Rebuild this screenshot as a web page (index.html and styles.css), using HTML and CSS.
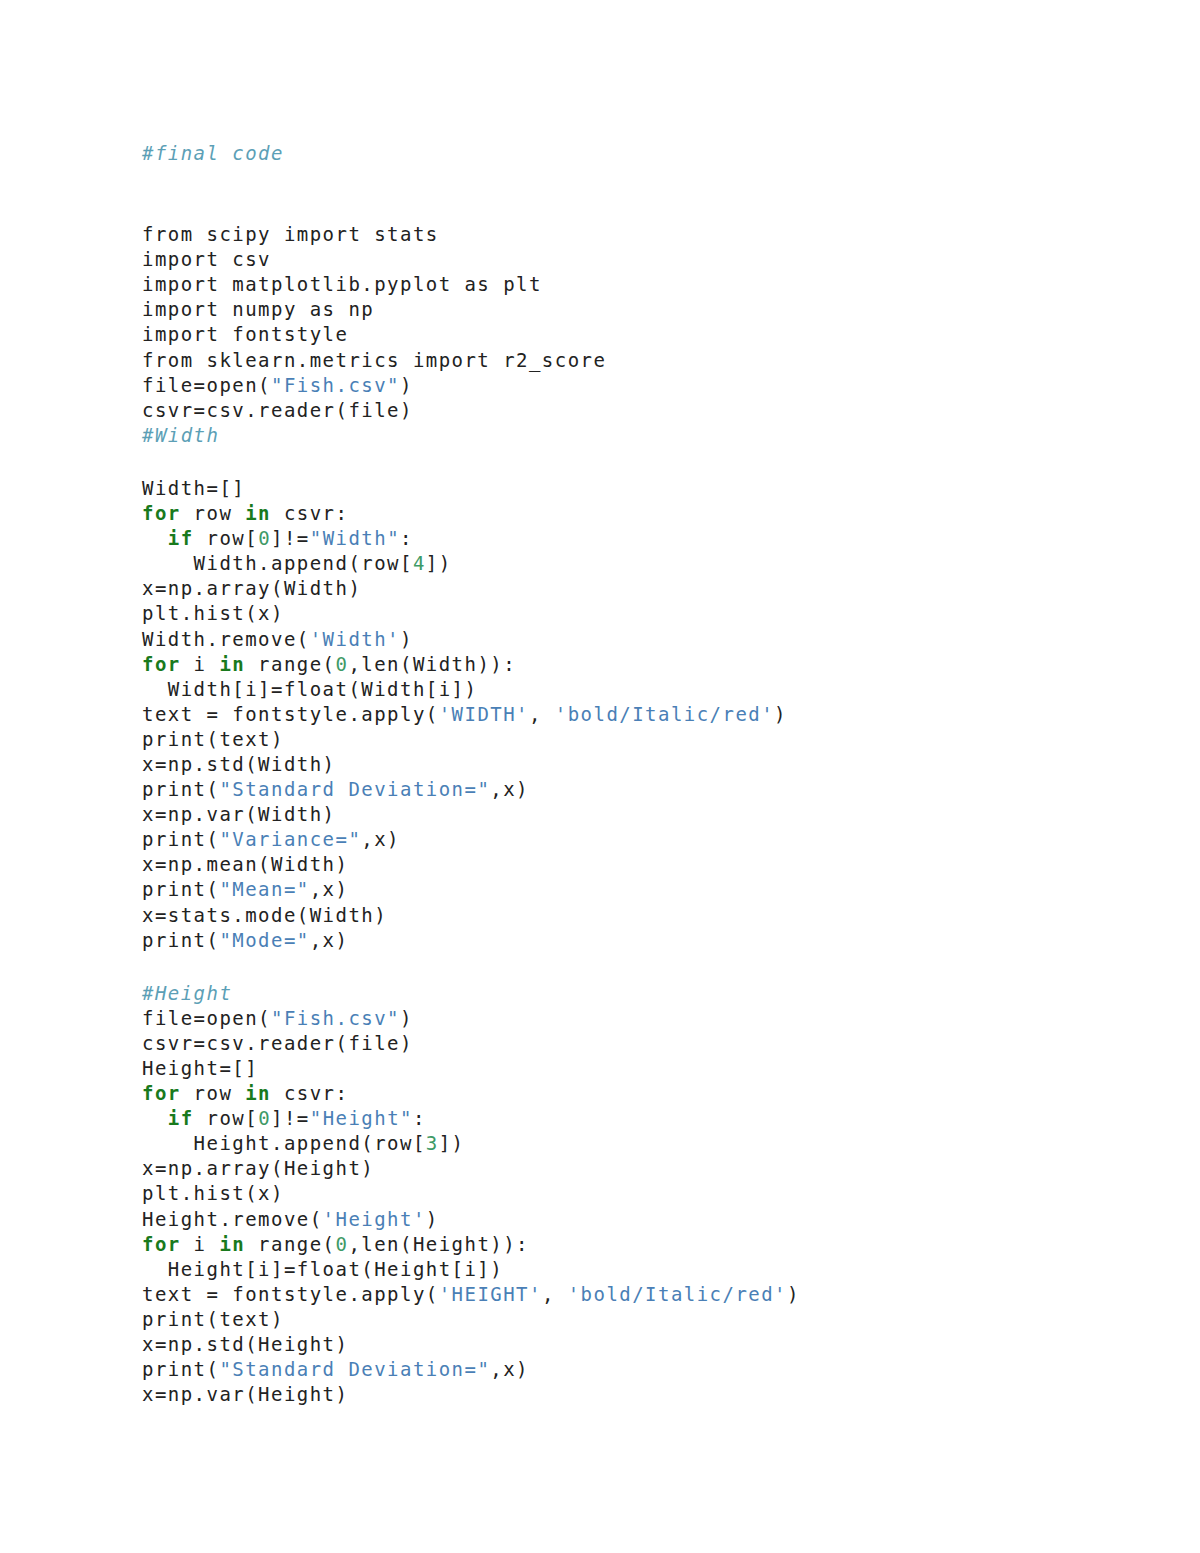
FILE: index.html
```html
<!DOCTYPE html>
<html>
<head>
<meta charset="utf-8">
<title>final code</title>
<link rel="stylesheet" href="styles.css">
</head>
<body>
<div class="page">
<div class="code">
<div class="ln"><span class="c">#final code</span></div>
<div class="ln blank"></div>
<div class="ln blank"></div>
<div class="ln">from scipy import stats</div>
<div class="ln">import csv</div>
<div class="ln">import matplotlib.pyplot as plt</div>
<div class="ln">import numpy as np</div>
<div class="ln">import fontstyle</div>
<div class="ln">from sklearn.metrics import r2_score</div>
<div class="ln">file=open(<span class="s">"Fish.csv"</span>)</div>
<div class="ln">csvr=csv.reader(file)</div>
<div class="ln"><span class="c">#Width</span></div>
<div class="ln blank"></div>
<div class="ln">Width=[]</div>
<div class="ln"><span class="k">for</span> row <span class="k">in</span> csvr:</div>
<div class="ln">  <span class="k">if</span> row[<span class="n">0</span>]!=<span class="s">"Width"</span>:</div>
<div class="ln">    Width.append(row[<span class="n">4</span>])</div>
<div class="ln">x=np.array(Width)</div>
<div class="ln">plt.hist(x)</div>
<div class="ln">Width.remove(<span class="s">'Width'</span>)</div>
<div class="ln"><span class="k">for</span> i <span class="k">in</span> range(<span class="n">0</span>,len(Width)):</div>
<div class="ln">  Width[i]=float(Width[i])</div>
<div class="ln">text = fontstyle.apply(<span class="s">'WIDTH'</span>, <span class="s">'bold/Italic/red'</span>)</div>
<div class="ln">print(text)</div>
<div class="ln">x=np.std(Width)</div>
<div class="ln">print(<span class="s">"Standard Deviation="</span>,x)</div>
<div class="ln">x=np.var(Width)</div>
<div class="ln">print(<span class="s">"Variance="</span>,x)</div>
<div class="ln">x=np.mean(Width)</div>
<div class="ln">print(<span class="s">"Mean="</span>,x)</div>
<div class="ln">x=stats.mode(Width)</div>
<div class="ln">print(<span class="s">"Mode="</span>,x)</div>
<div class="ln blank"></div>
<div class="ln"><span class="c">#Height</span></div>
<div class="ln">file=open(<span class="s">"Fish.csv"</span>)</div>
<div class="ln">csvr=csv.reader(file)</div>
<div class="ln">Height=[]</div>
<div class="ln"><span class="k">for</span> row <span class="k">in</span> csvr:</div>
<div class="ln">  <span class="k">if</span> row[<span class="n">0</span>]!=<span class="s">"Height"</span>:</div>
<div class="ln">    Height.append(row[<span class="n">3</span>])</div>
<div class="ln">x=np.array(Height)</div>
<div class="ln">plt.hist(x)</div>
<div class="ln">Height.remove(<span class="s">'Height'</span>)</div>
<div class="ln"><span class="k">for</span> i <span class="k">in</span> range(<span class="n">0</span>,len(Height)):</div>
<div class="ln">  Height[i]=float(Height[i])</div>
<div class="ln">text = fontstyle.apply(<span class="s">'HEIGHT'</span>, <span class="s">'bold/Italic/red'</span>)</div>
<div class="ln">print(text)</div>
<div class="ln">x=np.std(Height)</div>
<div class="ln">print(<span class="s">"Standard Deviation="</span>,x)</div>
<div class="ln">x=np.var(Height)</div>
</div>
</div>
</body>
</html>
```

FILE: styles.css
```css
html, body {
  margin: 0;
  padding: 0;
  background: #ffffff;
}

.page {
  width: 1200px;
  height: 1553px;
  box-sizing: border-box;
  padding: 141px 0 0 142px;
  overflow: hidden;
}

.code {
  font-family: "DejaVu Sans Mono", "Liberation Mono", monospace;
  font-size: 19px;
  letter-spacing: 1.46px;
  line-height: 25.1px;
  color: #222222;
}

.ln {
  height: 25.1px;
  white-space: pre;
}

.ln.blank {
  height: 28px;
}

.c {
  color: #5c9fb6;
  font-style: italic;
}

.s {
  color: #4a7fb6;
}

.k {
  color: #197a1d;
  font-weight: bold;
}

.n {
  color: #3e9a66;
}
```
